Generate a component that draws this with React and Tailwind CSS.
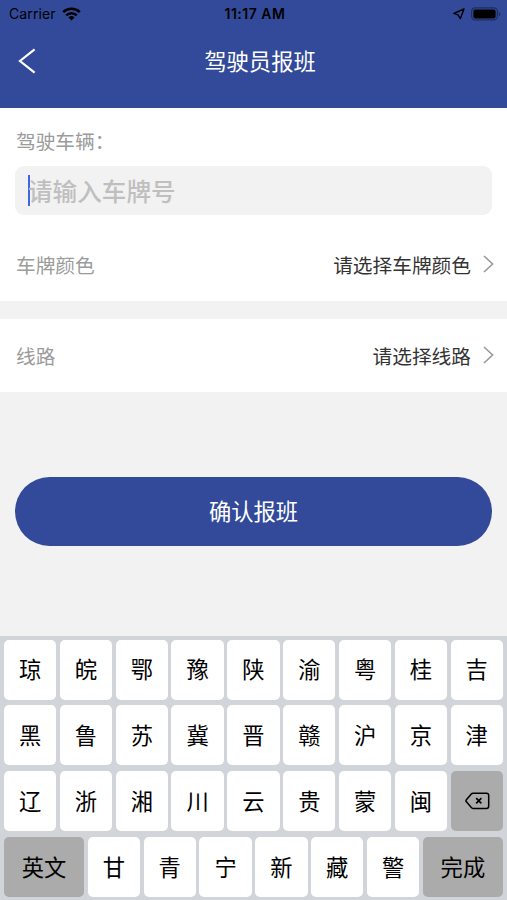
import { useState } from 'react';
import clsx from 'clsx';

const keyRows = [
  ['琼', '皖', '鄂', '豫', '陕', '渝', '粤', '桂', '吉'],
  ['黑', '鲁', '苏', '冀', '晋', '赣', '沪', '京', '津'],
  ['辽', '浙', '湘', '川', '云', '贵', '蒙', '闽', 'delete'],
  ['英文', '甘', '青', '宁', '新', '藏', '警', '完成'],
];

function StatusBar() {
  return (
    <div className="grid grid-cols-3 items-center h-[27px] pl-[9px] pr-[6px] text-black text-[14px] font-['Inter','Liberation_Sans',sans-serif]">
      <div className="flex items-center gap-[6px]">
        <span className="tracking-[0.1px]">Carrier</span>
        <svg width="19" height="14" viewBox="0 0 19 14" fill="none" stroke="currentColor" strokeWidth="2.5">
          <path d="M1.2 5.2 A11.8 11.8 0 0 1 17.8 5.2" />
          <path d="M4.2 8.3 A7.6 7.6 0 0 1 14.8 8.3" />
          <path d="M9.5 13.6 L6.5 10.5 A4.3 4.3 0 0 1 12.5 10.5 Z" fill="currentColor" stroke="none" />
        </svg>
      </div>
      <span className="text-center text-[14px] font-semibold tracking-[0.5px]">11:17 AM</span>
      <div className="flex items-center justify-end gap-[6px]">
        <svg width="12" height="12" viewBox="0 0 12 12" fill="none" stroke="currentColor" strokeWidth="1.4" strokeLinejoin="round">
          <path d="M11 1 L0.9 5.4 L5 6.9 L7.4 10.6 Z" />
        </svg>
        <svg width="30" height="14" viewBox="0 0 30 14">
          <rect x="0.6" y="0.9" width="25.8" height="12" rx="3.6" fill="none" stroke="#000" strokeOpacity="0.4" strokeWidth="1.2" />
          <rect x="2.4" y="2.6" width="22.2" height="8.8" rx="2" fill="#000" />
          <path d="M27.8 4.8 C29.8 5.8 29.8 8.2 27.8 9.2 Z" fill="#000" fillOpacity="0.4" />
        </svg>
      </div>
    </div>
  );
}

function Header() {
  return (
    <header className="h-[108px] bg-[#324a99]">
      <StatusBar />
      <div className="grid grid-cols-[60px_1fr_60px] items-center h-[67px]">
        <button className="pl-[18px] text-white">
          <svg width="20" height="28" viewBox="0 0 20 28" fill="none" stroke="currentColor" strokeWidth="2.2">
            <path d="M16.6 2.4 L2 14 L16.6 25.6" />
          </svg>
        </button>
        <h1 className="pl-[13px] text-center text-[22.3px] text-white">驾驶员报班</h1>
      </div>
    </header>
  );
}

function SelectRow({ label, value, className }) {
  return (
    <div className={clsx('flex items-center justify-between pl-4 pr-[13px] text-[19.7px]', className)}>
      <span className="text-[#9b9b9b]">{label}</span>
      <div className="flex items-center gap-[12px] text-[#333333]">
        <span>{value}</span>
        <svg width="11" height="18" viewBox="0 0 11 18" fill="none" stroke="#999999" strokeWidth="1.6">
          <path d="M1 1 L9.6 9 L1 17" />
        </svg>
      </div>
    </div>
  );
}

function Key({ value, onPress }) {
  const isWide = value.length === 2;
  const isDelete = value === 'delete';

  return (
    <button
      onClick={() => onPress(value)}
      className={clsx(
        'flex items-center justify-center h-[60px] pb-px rounded-[5px] text-[22.3px] text-black',
        isWide ? 'w-[80.2px]' : 'w-[52.3px]',
        isWide || isDelete ? 'bg-[#ababab]' : 'bg-white'
      )}
    >
      {isDelete ? (
        <svg className="ml-[2px]" width="25" height="18" viewBox="0 0 25 18" fill="none" stroke="currentColor" strokeWidth="1.5">
          <path d="M8 1.2 H21.5 Q23.7 1.2 23.7 3.4 V14.2 Q23.7 16.4 21.5 16.4 H8 Q7 16.4 6.3 15.6 L1.2 9.6 Q0.6 8.8 1.2 8 L6.3 2 Q7 1.2 8 1.2 Z" />
          <path d="M11.2 6.2 L16.4 11.4 M16.4 6.2 L11.2 11.4" strokeWidth="1.7" />
        </svg>
      ) : (
        value
      )}
    </button>
  );
}

export default function App() {
  const [plate, setPlate] = useState('');

  const handleKey = (key) => {
    if (key === 'delete') {
      setPlate(plate.slice(0, -1));
    } else if (key.length === 1) {
      setPlate(plate + key);
    }
  };

  return (
    <div className="flex flex-col w-[507px] h-[900px] overflow-hidden bg-[#f2f2f2] font-['Noto_Sans_CJK_SC',sans-serif]">
      <Header />

      {/* Vehicle */}
      <section className="h-[193px] bg-white">
        <div className="flex items-center h-[58px] pt-[7px] pl-4 text-[19.7px] text-[#9b9b9b]">驾驶车辆：</div>
        <div className="flex items-center h-[49px] mx-[15px] pl-[13px] rounded-[9px] bg-[#f2f2f2] text-[24.6px]">
          <span className="w-[2px] h-[31px] -mr-[2px] bg-[#3f66e8]" />
          <span className={clsx('pb-px font-medium', plate ? 'text-[#333333]' : 'text-[#bfbfbf]')}>
            {plate || '请输入车牌号'}
          </span>
        </div>
        <SelectRow label="车牌颜色" value="请选择车牌颜色" className="h-[86px] pt-[13px]" />
      </section>

      {/* Route */}
      <section className="mt-[18px] bg-white">
        <SelectRow label="线路" value="请选择线路" className="h-[73px]" />
      </section>

      <button className="h-[69px] mt-[85px] mx-[15px] pb-px rounded-full bg-[#324a99] text-[22.3px] text-white">
        确认报班
      </button>

      {/* Plate keyboard */}
      <div className="flex flex-col gap-[5.7px] mt-auto h-[264px] pt-[3.7px] px-[4px] bg-[#d1d4d9]">
        {keyRows.map((row) => (
          <div key={row[0]} className="flex justify-between">
            {row.map((key) => (
              <Key key={key} value={key} onPress={handleKey} />
            ))}
          </div>
        ))}
      </div>
    </div>
  );
}
